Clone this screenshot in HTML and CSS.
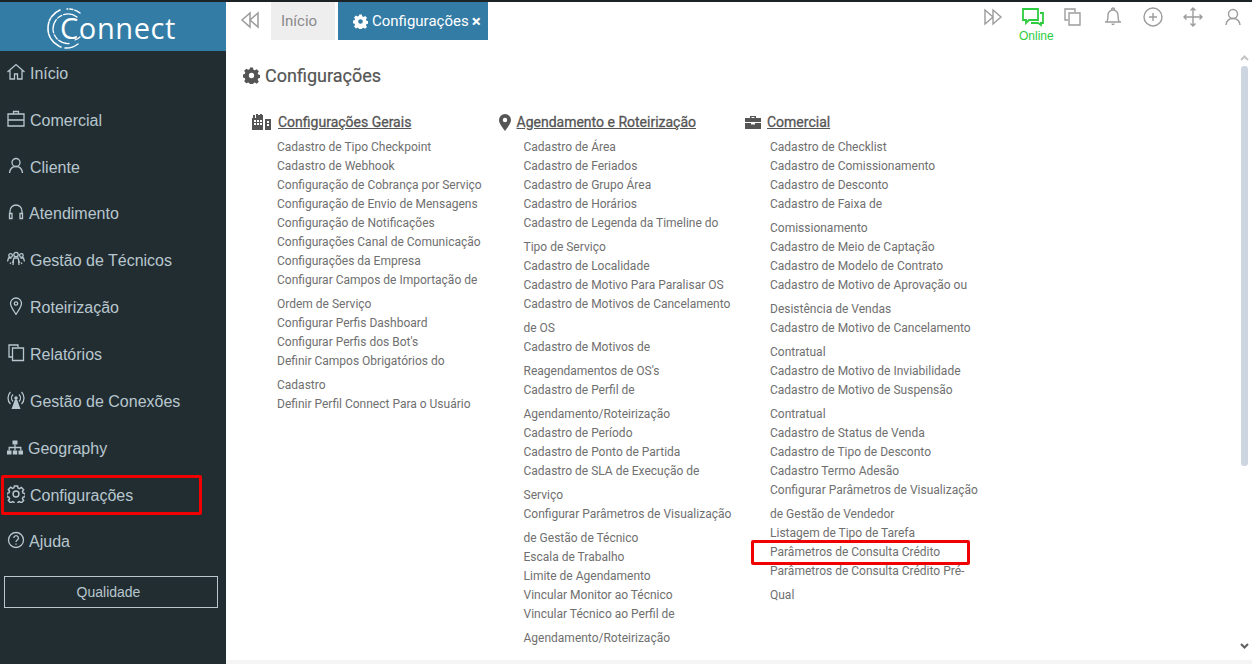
FILE: index.html
```html
<!DOCTYPE html>
<html lang="pt-BR">
<head>
    <meta charset="UTF-8">
    <title>Configurações - Connect</title>
    <link rel="stylesheet" href="styles.css">
</head>
<body>
    <div class="sidebar">
        <div class="logo-container">
            <svg class="logo-arcs" width="44" height="42" viewBox="0 0 44 42" fill="none" stroke="#fff" stroke-linecap="round">
                <path d="M34 5A19.5 19.5 0 0 0 21 1" stroke-width="1.4" stroke-dasharray="6 2 3 2"/>
                <path d="M14 2A19.5 19.5 0 0 0 2 21A19.5 19.5 0 0 0 15 39" stroke-width="1.6" stroke-dasharray="11 1.5 3 1.5"/>
                <path d="M19 40A19.5 19.5 0 0 0 32 36" stroke-width="1.4"/>
                <path d="M31 9A15 15 0 0 0 7 21A15 15 0 0 0 23 35.500" stroke-width="1.3" stroke-dasharray="14 2 5 2"/>
                <path d="M29 32A14.500 14.500 0 0 0 34 29" stroke-width="1.2"/>
            </svg>
            <span class="logo-text">Connect</span>
        </div>
        <ul class="menu">
            <li class="menu-item">
                <svg class="ico" viewBox="0 0 18 18"><path d="M.5 9 9 1.500 17.500 9M3 7.500V16h4.500v-5h3v5H15V7.500"/></svg>
                <span>Início</span>
            </li>
            <li class="menu-item">
                <svg class="ico" viewBox="0 0 18 18"><path d="M1 4h16v12H1zM1 10h16M6.500 4V1.500h5V4M8 10h2"/></svg>
                <span>Comercial</span>
            </li>
            <li class="menu-item">
                <svg class="ico" viewBox="0 0 18 18"><circle cx="9" cy="5.500" r="4"/><path d="M2.500 16c.5-4 3-6.500 6.500-6.500s6 2.500 6.500 6.500"/></svg>
                <span>Cliente</span>
            </li>
            <li class="menu-item menu-item-near">
                <svg class="ico" viewBox="0 0 18 18"><path d="M3 11V8a6 6 0 0 1 12 0v3"/><path d="M2.500 10.500h2.500v5H2.500zM13 10.500h2.500v5H13z"/></svg>
                <span>Atendimento</span>
            </li>
            <li class="menu-item">
                <svg class="ico" viewBox="0 0 18 18"><circle cx="9" cy="4.500" r="2.200"/><circle cx="3.600" cy="5.500" r="1.800"/><circle cx="14.400" cy="5.500" r="1.800"/><path d="M5.500 13 7 8h4l1.500 5M6.500 10.500l-.5 4.500M11.500 10.500l.5 4.500M.5 11.500l1-3.500h3M17.500 11.500l-1-3.500h-3M4 12.500l-1 1.500M14 12.500l1 1.500"/></svg>
                <span>Gestão de Técnicos</span>
            </li>
            <li class="menu-item">
                <svg class="ico" viewBox="0 0 18 18"><path d="M9 17.500C6 12.500 3.500 9.500 3.500 6.500a5.500 5.500 0 0 1 11 0C14.500 9.500 12 12.500 9 17.500z"/><circle cx="9" cy="6.500" r="1.700"/></svg>
                <span>Roteirização</span>
            </li>
            <li class="menu-item">
                <svg class="ico" viewBox="0 0 18 18"><path d="M11 3V1H2v12h3"/><path d="M5.500 4h11v12.500h-11z"/></svg>
                <span>Relatórios</span>
            </li>
            <li class="menu-item">
                <svg class="ico" viewBox="0 0 18 18"><path d="M6 3.500a5 5 0 0 0 0 7M12 3.500a5 5 0 0 1 0 7M3.500 1a8.500 8.500 0 0 0 0 12M14.500 1a8.500 8.500 0 0 1 0 12"/><circle cx="9" cy="7" r="1.800" class="ico-solid"/><path class="ico-solid" d="M8 8.500h2L13.500 18h-9z"/></svg>
                <span>Gestão de Conexões</span>
            </li>
            <li class="menu-item menu-item-tree">
                <svg class="ico" viewBox="0 0 18 18"><path class="ico-solid" d="M6.500 2.500h5v4h-5zM1 12.500h4.500v4H1zM6.800 12.500h4.400v4H6.800zM12.500 12.500H17v4h-4.500z"/><path d="M9 6.500v6M3.200 12.500V9.500h11.600v3"/></svg>
                <span>Geography</span>
            </li>
            <li class="menu-item menu-item-marked">
                <svg class="ico" viewBox="0 0 16 16"><circle cx="8" cy="8" r="2.600"/><path d="M6.600.8h2.800l.4 1.900 1.300.6 1.700-1.100 2 2-1.100 1.700.6 1.300 1.900.4v2.800l-1.900.4-.6 1.300 1.100 1.700-2 2-1.700-1.100-1.300.6-.4 1.900H6.600l-.4-1.900-1.300-.6-1.700 1.100-2-2 1.100-1.700-.6-1.300-1.900-.4V7.400l1.900-.4.600-1.300-1.100-1.700 2-2 1.700 1.100 1.300-.6z"/></svg>
                <span>Configurações</span>
            </li>
            <li class="menu-item menu-item-near">
                <svg class="ico" viewBox="0 0 18 18"><circle cx="9" cy="9" r="7.500"/><path d="M6.800 7a2.300 2.300 0 1 1 3.500 2c-.9.600-1.300 1-1.300 2M9 12.500v1.300"/></svg>
                <span>Ajuda</span>
            </li>
        </ul>
        <button class="btn-quality">Qualidade</button>
    </div>

    <div class="main">
        <div class="topbar">
            <svg class="ico-back" width="20" height="18" viewBox="0 0 20 18"><path d="M10 2 2 9l8 7zM18 2l-8 7 8 7z"/></svg>
            <div class="tab">Início</div>
            <div class="tab tab-active">
                <svg class="gear" width="15" height="15" viewBox="0 0 16 16"><use href="#gear-solid"/></svg>
                <span>Configurações</span>
                <b class="tab-close">×</b>
            </div>
            <div class="tools">
                <div class="tool"><svg viewBox="0 0 20 18"><path d="M2 2l8 7-8 7zM10 2l8 7-8 7z"/></svg></div>
                <div class="tool tool-online">
                    <svg viewBox="0 0 22 18"><path d="M1 1h15v11H7l-3 3v-3H1z"/><path d="M18 5h3v10h-2v2l-3-2H9"/></svg>
                    <span>Online</span>
                </div>
                <div class="tool"><svg viewBox="0 0 20 18"><path d="M12 4V1H2v11h3"/><path d="M6 5h11v12H6z"/></svg></div>
                <div class="tool"><svg viewBox="0 0 20 18"><path d="M4 14c1-2 1-4 1-7a5 5 0 0 1 10 0c0 3 0 5 1 7zM2 14h16M8.500 1.500a1.500 1.500 0 0 1 3 0M9 15.500a1 1 0 0 0 2 0"/></svg></div>
                <div class="tool"><svg viewBox="0 0 20 20"><circle cx="10" cy="10" r="9"/><path d="M10 6v8M6 10h8"/></svg></div>
                <div class="tool"><svg viewBox="0 0 20 20"><path d="M10 1v18M1 10h18M7.500 3.500 10 1l2.500 2.500M7.500 16.500 10 19l2.500-2.500M3.500 7.500 1 10l2.500 2.500M16.500 7.500 19 10l-2.500 2.500"/></svg></div>
                <div class="tool"><svg viewBox="0 0 20 18"><circle cx="10" cy="6" r="4.500"/><path d="M3 17c.5-4 3-6.500 7-6.500s6.500 2.500 7 6.500"/></svg></div>
            </div>
        </div>

        <div class="content-row">
            <div class="content">
                <h2 class="page-title">
                    <svg class="gear" width="17" height="17" viewBox="0 0 16 16">
                        <path id="gear-solid" fill-rule="evenodd" d="M6.600.5h2.800l.4 2 1.300.6 1.800-1.100 2 2-1.100 1.800.6 1.300 2 .4v2.800l-2 .4-.6 1.300 1.100 1.800-2 2-1.800-1.100-1.300.6-.4 2H6.600l-.4-2-1.300-.6L3.100 15.400l-2-2 1.100-1.800-.6-1.300-2-.4V7.100l2-.4.600-1.300L1.100 3.600l2-2 1.800 1.100 1.300-.6zM8 5.500a2.500 2.500 0 1 0 0 5 2.500 2.500 0 0 0 0-5z"/>
                    </svg>
                    Configurações
                </h2>
                <div class="sections">
                    <div class="section">
                        <h3 class="section-title">
                            <svg width="20" height="16" viewBox="0 0 20 16"><path d="M0 4h1V1h2v3h1V0h2v1h2V0h2v1h1v15h-2v-3H9v3H0zM2 6v2h2V6zm3 0v2h2V6zm3 0v2h2V6zm-6 3v2h2V9zm3 0v2h2V9zm3 0v2h2V9zM13 5h6v11h-6zm2 2v2h2V7zm0 3v2h2v-2z" fill-rule="evenodd"/></svg>
                            <span class="section-link">Configurações Gerais</span>
                        </h3>
                        <ul class="links">
                            <li>Cadastro de Tipo Checkpoint</li>
                            <li>Cadastro de Webhook</li>
                            <li>Configuração de Cobrança por Serviço</li>
                            <li>Configuração de Envio de Mensagens</li>
                            <li>Configuração de Notificações</li>
                            <li>Configurações Canal de Comunicação</li>
                            <li>Configurações da Empresa</li>
                            <li>Configurar Campos de Importação de Ordem de Serviço</li>
                            <li>Configurar Perfis Dashboard</li>
                            <li>Configurar Perfis dos Bot's</li>
                            <li>Definir Campos Obrigatórios do Cadastro</li>
                            <li>Definir Perfil Connect Para o Usuário</li>
                        </ul>
                    </div>
                    <div class="section">
                        <h3 class="section-title">
                            <svg width="12" height="17" viewBox="0 0 12 17"><path fill-rule="evenodd" d="M6 0a6 6 0 0 1 6 6c0 3-3 7-6 11C3 13 0 9 0 6a6 6 0 0 1 6-6zm0 3.800a2.200 2.200 0 1 0 0 4.400 2.200 2.200 0 0 0 0-4.400z"/></svg>
                            <span class="section-link">Agendamento e Roteirização</span>
                        </h3>
                        <ul class="links">
                            <li>Cadastro de Área</li>
                            <li>Cadastro de Feriados</li>
                            <li>Cadastro de Grupo Área</li>
                            <li>Cadastro de Horários</li>
                            <li>Cadastro de Legenda da Timeline do Tipo de Serviço</li>
                            <li>Cadastro de Localidade</li>
                            <li>Cadastro de Motivo Para Paralisar OS</li>
                            <li>Cadastro de Motivos de Cancelamento de OS</li>
                            <li>Cadastro de Motivos de Reagendamentos de OS's</li>
                            <li>Cadastro de Perfil de Agendamento/Roteirização</li>
                            <li>Cadastro de Período</li>
                            <li>Cadastro de Ponto de Partida</li>
                            <li>Cadastro de SLA de Execução de Serviço</li>
                            <li>Configurar Parâmetros de Visualização de Gestão de Técnico</li>
                            <li>Escala de Trabalho</li>
                            <li>Limite de Agendamento</li>
                            <li>Vincular Monitor ao Técnico</li>
                            <li>Vincular Técnico ao Perfil de Agendamento/Roteirização</li>
                        </ul>
                    </div>
                    <div class="section">
                        <h3 class="section-title">
                            <svg width="16" height="14" viewBox="0 0 16 14"><path d="M5 3V1h6v2h5v4H0V3zm1.500 0h3V2h-3zM0 8h6v1.500h4V8h6v6H0z" fill-rule="evenodd"/></svg>
                            <span class="section-link">Comercial</span>
                        </h3>
                        <ul class="links">
                            <li>Cadastro de Checklist</li>
                            <li>Cadastro de Comissionamento</li>
                            <li>Cadastro de Desconto</li>
                            <li>Cadastro de Faixa de Comissionamento</li>
                            <li>Cadastro de Meio de Captação</li>
                            <li>Cadastro de Modelo de Contrato</li>
                            <li>Cadastro de Motivo de Aprovação ou Desistência de Vendas</li>
                            <li>Cadastro de Motivo de Cancelamento Contratual</li>
                            <li>Cadastro de Motivo de Inviabilidade</li>
                            <li>Cadastro de Motivo de Suspensão Contratual</li>
                            <li>Cadastro de Status de Venda</li>
                            <li>Cadastro de Tipo de Desconto</li>
                            <li>Cadastro Termo Adesão</li>
                            <li>Configurar Parâmetros de Visualização de Gestão de Vendedor</li>
                            <li>Listagem de Tipo de Tarefa</li>
                            <li class="link-marked">Parâmetros de Consulta Crédito</li>
                            <li>Parâmetros de Consulta Crédito Pré-Qual</li>
                        </ul>
                    </div>
                </div>
            </div>
            <div class="scrollbar">
                <svg class="arrow-up" width="9" height="6" viewBox="0 0 9 6"><path d="M1 5l3.500-3.500L8 5"/></svg>
                <div class="scroll-thumb"></div>
                <svg class="arrow-down" width="9" height="6" viewBox="0 0 9 6"><path d="M1 1l3.500 3.500L8 1"/></svg>
            </div>
        </div>
        <div class="bottom-strip"></div>
    </div>
</body>
</html>
```

FILE: styles.css
```css
:root {
    --brand-blue: #337ca6;
    --sidebar-bg: #222d32;
    --sidebar-text: #b8c7ce;
    --icon-grey: #9c9c9c;
    --link-text: #6f6f6f;
    --title-text: #555;
    --marker: #f00000;
}

*, *::after {
    box-sizing: border-box;
}

body {
    margin: 0;
    height: 664px;
    overflow: hidden;
    display: flex;
    border-top: 2px solid #1c2326;
    background-color: #fff;
    font-family: "Liberation Sans", Arial, sans-serif;
}

ul {
    list-style: none;
    margin: 0;
    padding: 0;
}

/* Sidebar */
.sidebar {
    width: 226px;
    flex-shrink: 0;
    background-color: var(--sidebar-bg);
    color: var(--sidebar-text);
}

.logo-container {
    height: 49px;
    background-color: var(--brand-blue);
    display: flex;
    align-items: center;
    padding-left: 47px;
    position: relative;
}

.logo-arcs {
    position: absolute;
    left: 46px;
    top: 6px;
}

.logo-text {
    font-family: "Open Sans", sans-serif;
    font-size: 29px;
    letter-spacing: .6px;
    color: #fff;
    margin-left: 13px;
    margin-top: 1px;
}

.menu {
    margin-top: -.5px;
}

.menu-item {
    height: 46.85px;
    padding-left: 7px;
    display: flex;
    align-items: center;
    gap: 5px;
    font-size: 16px;
    position: relative;
}

.menu-item-near {
    gap: 4px;
}

.menu-item-tree {
    padding-left: 6px;
    gap: 4px;
}

.menu-item-marked::after {
    content: "";
    position: absolute;
    left: 1px;
    top: 3px;
    width: 201px;
    height: 40px;
    border: 3px solid var(--marker);
    border-radius: 2px;
}

.ico {
    width: 18px;
    height: 18px;
    margin-bottom: 4px;
    fill: none;
    stroke: var(--sidebar-text);
    stroke-width: 1.3;
    flex-shrink: 0;
}

.ico .ico-solid {
    fill: var(--sidebar-text);
    stroke: none;
}

.btn-quality {
    display: block;
    width: 214px;
    height: 32px;
    margin: 10px 0 0 4px;
    padding: 0 5px 0 0;
    background: transparent;
    border: 1px solid var(--sidebar-text);
    color: var(--sidebar-text);
    font-family: inherit;
    font-size: 14px;
}

/* Top bar */
.main {
    flex: 1;
    min-width: 0;
    display: flex;
    flex-direction: column;
}

.topbar {
    height: 38px;
    flex-shrink: 0;
    display: flex;
    align-items: stretch;
    font-family: Roboto, sans-serif;
}

.ico-back {
    margin: 9px 11px 0 14px;
    fill: none;
    stroke: var(--icon-grey);
    stroke-width: 1.5;
}

.tab {
    background-color: #eee;
    color: #8a8a8a;
    font-size: 15px;
    width: 64px;
    display: flex;
    align-items: center;
    padding-left: 10px;
    margin-right: 3px;
}

.tab-active {
    background-color: var(--brand-blue);
    color: #fff;
    width: 150px;
    padding-left: 15px;
    gap: 4px;
}

.tab-active .gear {
    fill: #fff;
}

.tab-close {
    font-size: 17px;
    line-height: 1;
    margin-left: -1px;
}

.tools {
    margin-left: auto;
    margin-right: -1px;
    display: flex;
}

.tool {
    width: 40px;
    display: flex;
    flex-direction: column;
    align-items: center;
    padding-top: 5px;
    position: relative;
}

.tool svg {
    width: 20px;
    height: 20px;
    fill: none;
    stroke: var(--icon-grey);
    stroke-width: 1.4;
}

.tool-online svg {
    stroke: #2ecc40;
    stroke-width: 1.8;
    width: 22px;
    height: 20px;
}

.tool-online span {
    position: absolute;
    top: 27px;
    left: 6px;
    font-size: 12px;
    font-family: "Liberation Sans", Arial, sans-serif;
    color: #2ecc40;
}

/* Page content */
.content-row {
    flex: 1;
    min-height: 0;
    display: flex;
}

.content {
    flex: 1;
    min-width: 0;
    padding: 23px 0 0 17px;
    overflow: hidden;
    font-family: Roboto, sans-serif;
}

.page-title {
    margin: 0 0 23px;
    height: 24px;
    display: flex;
    align-items: center;
    gap: 5px;
    font-size: 18px;
    font-weight: 400;
    color: var(--title-text);
    -webkit-text-stroke: .2px var(--title-text);
}

.page-title .gear {
    fill: var(--title-text);
}

.sections {
    display: grid;
    grid-template-columns: repeat(3, 246.5px);
    padding-left: 9px;
}

.section-title {
    margin: 0 0 1px;
    height: 24px;
    display: flex;
    align-items: center;
    gap: 6px;
    font-size: 14px;
    font-weight: 400;
    color: var(--title-text);
    -webkit-text-stroke: .3px var(--title-text);
}

.section-title svg {
    fill: var(--title-text);
}

.section-link {
    text-decoration: underline;
}

.links {
    padding-left: 25px;
    width: 236px;
    font-size: 12px;
    color: var(--link-text);
}

.links li {
    line-height: 24px;
    margin-bottom: -5px;
    position: relative;
}

.link-marked::after {
    content: "";
    position: absolute;
    left: -19px;
    top: 0;
    width: 219px;
    height: 25px;
    border: 3px solid var(--marker);
    border-radius: 2px;
}

/* Scrollbar */
.scrollbar {
    width: 11px;
    margin-right: 2px;
    flex-shrink: 0;
    display: flex;
    flex-direction: column;
    align-items: center;
    padding-top: 15px;
}

.scrollbar svg {
    fill: none;
    stroke-width: 2;
}

.arrow-up {
    stroke: #c4c4c4;
}

.arrow-down {
    stroke: #5f5f5f;
    margin-top: auto;
    margin-bottom: 11px;
}

.scroll-thumb {
    width: 7px;
    height: 400px;
    margin-top: 5px;
    border-radius: 3px;
    background-color: #cdd6e0;
}

.bottom-strip {
    height: 4px;
    flex-shrink: 0;
    background-color: #f5f5f5;
}
```
